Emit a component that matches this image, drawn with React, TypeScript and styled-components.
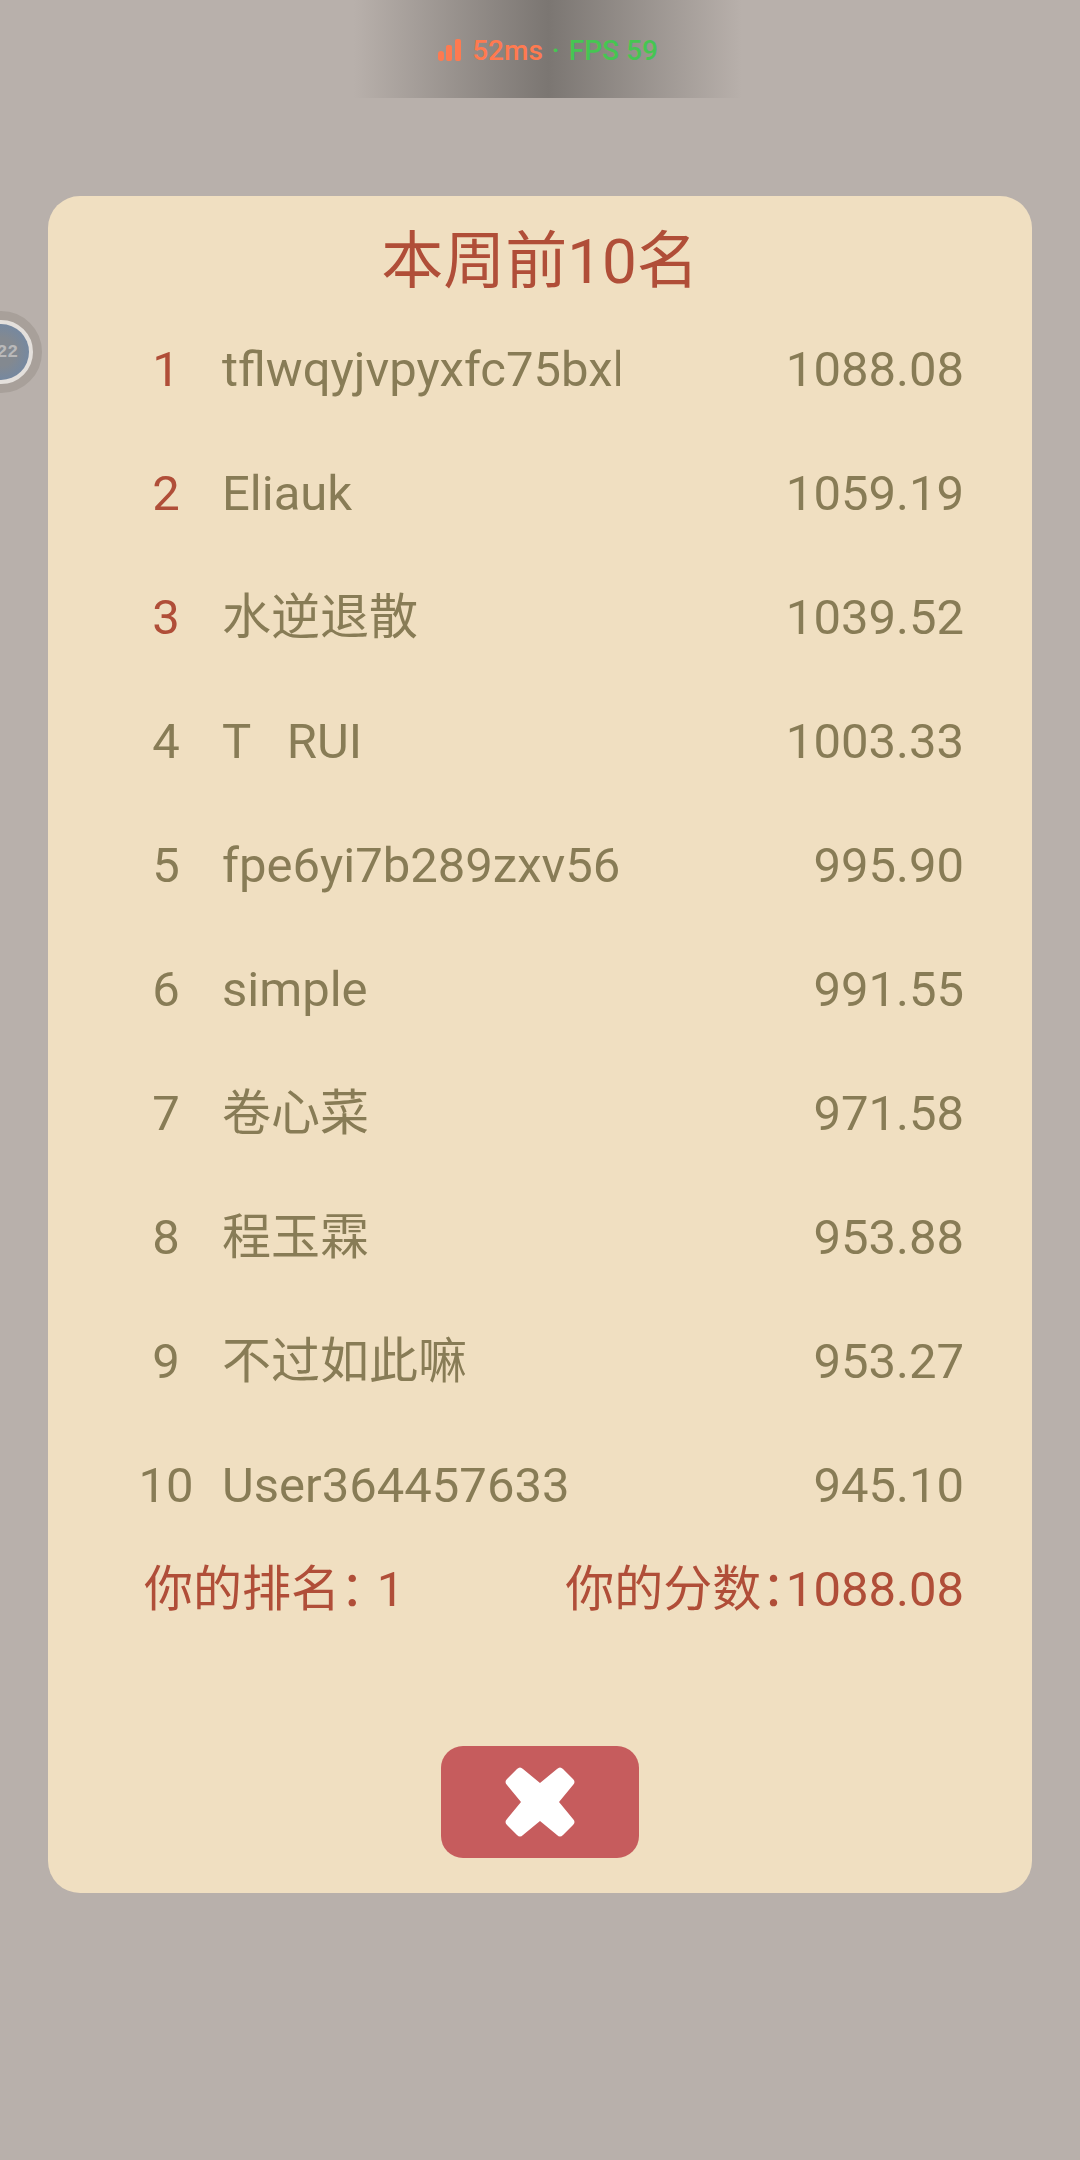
import React from "react";
import styled, { createGlobalStyle } from "styled-components";

const GlobalStyle = createGlobalStyle`
  * { box-sizing: border-box; }
  body {
    margin: 0;
    background: #b8b0ab;
    font-family: Roboto, "Noto Sans CJK SC", sans-serif;
  }
`;

const Screen = styled.div`
  position: relative;
  min-height: 100vh;
  display: flex;
  flex-direction: column;
  overflow-x: hidden;
`;

const StatusBar = styled.header`
  align-self: center;
  display: flex;
  align-items: center;
  justify-content: center;
  gap: 9px;
  width: 388px;
  margin-left: 16px;
  height: 98px;
  padding-top: 4px;
  background: linear-gradient(to right, #b8b0ab 0%, #7b7672 50%, #b8b0ab 100%);
  font-size: 28px;
  font-weight: 500;
  line-height: 32px;
`;

const Ping = styled.span`
  display: flex;
  align-items: center;
  gap: 10px;
  color: #ff7a50;
`;

const Fps = styled.span`
  color: #46c552;
`;

const Panel = styled.main`
  display: flex;
  flex-direction: column;
  align-items: stretch;
  margin: 98px 48px 0;
  padding: 30px 68px 35px 80px;
  border-radius: 32px;
  background: #f0dfc1;
`;

const Title = styled.h1`
  margin: 0 12px 10px 0;
  color: #b04e38;
  font-size: 62px;
  font-weight: 400;
  line-height: 72px;
  text-align: center;
`;

const Board = styled.table`
  width: 100%;
  table-layout: fixed;
  border-collapse: collapse;
  color: #887c56;
  font-size: 49px;
  line-height: 56px;
`;

const Row = styled.tr`
  height: 124px;
`;

const Rank = styled.th<{ $top: boolean }>`
  width: 76px;
  padding: 0;
  color: ${(p) => (p.$top ? "#b04e38" : "inherit")};
  font-weight: 400;
  text-align: center;
`;

const Name = styled.td`
  width: 50%;
  padding: 0 2px 0 18px;
`;

const Clip = styled.div`
  overflow: hidden;
  white-space: pre;
`;

const Score = styled.td`
  padding: 0;
  text-align: right;
`;

const Summary = styled.div`
  display: flex;
  justify-content: space-between;
  margin-top: 14px;
  padding-left: 16px;
  color: #b04e38;
  font-size: 49px;
  font-feature-settings: "halt";
  line-height: 56px;
`;

const CloseButton = styled.button`
  display: flex;
  align-items: center;
  justify-content: center;
  align-self: center;
  width: 198px;
  height: 112px;
  margin: 128px 12px 0 0;
  padding: 0;
  border: 0;
  border-radius: 22px;
  background: #c65c5d;
  cursor: pointer;
`;

const Bubble = styled.div`
  position: absolute;
  top: 311px;
  left: -40px;
  width: 82px;
  height: 82px;
  border: 9px solid #a8a09a;
  border-radius: 50%;
  background: #e4e0dc;
`;

const BubbleFace = styled.div`
  display: flex;
  align-items: center;
  justify-content: flex-end;
  width: 56px;
  height: 56px;
  margin: 4px;
  padding-right: 11px;
  border-radius: 50%;
  background: radial-gradient(circle, #838990 35%, #7288a4 80%);
  color: #b9b9ba;
  font-family: "Liberation Mono", monospace;
  font-size: 18px;
  font-weight: 700;
  line-height: 20px;
`;

const players = [
  { name: "tflwqyjvpyxfc75bxl", score: "1088.08" },
  { name: "Eliauk", score: "1059.19" },
  { name: "水逆退散", score: "1039.52" },
  { name: "T   RUI", score: "1003.33" },
  { name: "fpe6yi7b289zxv56", score: "995.90" },
  { name: "simple", score: "991.55" },
  { name: "卷心菜", score: "971.58" },
  { name: "程玉霖", score: "953.88" },
  { name: "不过如此嘛", score: "953.27" },
  { name: "User364457633", score: "945.10" },
];

function SignalIcon() {
  return (
    <svg width="24" height="24" viewBox="0 0 24 24" fill="currentColor" aria-hidden="true">
      <rect x="0" y="12" width="6" height="10" rx="3" />
      <rect x="8" y="6" width="6" height="16" rx="2" />
      <rect x="17" y="0" width="6" height="22" rx="2" />
    </svg>
  );
}

function CrossIcon() {
  return (
    <svg width="70" height="70" viewBox="0 0 70 70" aria-hidden="true">
      <path
        d="M12 2Q15 -1 18 2L35 16L52 2Q55 -1 58 2L68 12Q71 15 68 18L54 35L68 52Q71 55 68 58L58 68Q55 71 52 68L35 54L18 68Q15 71 12 68L2 58Q-1 55 2 52L16 35L2 18Q-1 15 2 12Z"
        fill="#fff"
      />
    </svg>
  );
}

export default function App() {
  return (
    <Screen>
      <GlobalStyle />
      <StatusBar>
        <Ping>
          <SignalIcon />
          52ms
        </Ping>
        <Fps>·</Fps>
        <Fps>FPS 59</Fps>
      </StatusBar>
      <Panel>
        <Title>本周前10名</Title>
        <Board>
          <tbody>
            {players.map((player, i) => (
              <Row key={player.name}>
                <Rank scope="row" $top={i < 3}>{i + 1}</Rank>
                <Name><Clip>{player.name}</Clip></Name>
                <Score>{player.score}</Score>
              </Row>
            ))}
          </tbody>
        </Board>
        <Summary>
          <span>你的排名： 1</span>
          <span>你的分数：1088.08</span>
        </Summary>
        <CloseButton type="button" aria-label="关闭">
          <CrossIcon />
        </CloseButton>
      </Panel>
      <Bubble>
        <BubbleFace>22</BubbleFace>
      </Bubble>
    </Screen>
  );
}
